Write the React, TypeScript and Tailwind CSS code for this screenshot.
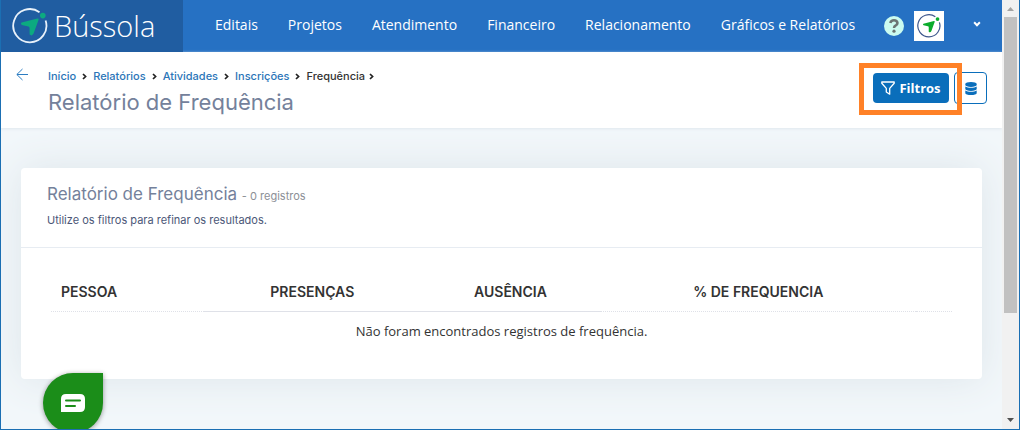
import { FaDatabase } from "react-icons/fa";

const MENU = ["Editais", "Projetos", "Atendimento", "Financeiro", "Relacionamento", "Gráficos e Relatórios"];

const TRAIL = ["Início", "Relatórios", "Atividades", "Inscrições"];

const COLUMNS = [
  { label: "PESSOA", className: "w-[17%] border-dotted px-2.5 text-left" },
  { label: "PRESENÇAS", className: "w-[24%] border-solid text-center" },
  { label: "AUSÊNCIA", className: "w-[20%] border-solid text-center" },
  { label: "% DE FREQUENCIA", className: "w-[35%] border-dotted text-center" },
  { label: "", className: "border-dotted" },
];

function Compass({ ring, mark, className }: { ring: string; mark: string; className: string }) {
  return (
    <svg viewBox="0 0 36 36" className={className} fill="none" aria-hidden="true">
      <path d="M27.5 4.2A16.6 16.6 0 1 0 33.6 12.5" stroke={ring} strokeWidth="1.8" />
      <circle cx="30.8" cy="7.6" r="2.8" fill={mark} />
      <path
        d="M9.6 14.6L25.4 10.6Q27 10.4 26.5 12L21.6 25.6Q20 28.6 17.6 26.6L17.6 20Q17.5 18.7 16.4 18.4L9.8 17Q8 15.6 9.6 14.6Z"
        fill={mark}
      />
    </svg>
  );
}

function Chevron({ className }: { className: string }) {
  return (
    <svg viewBox="0 0 5 7" className={className} fill="none" stroke="currentColor" strokeWidth="1.7" aria-hidden="true">
      <path d="M1 1L3.6 3.5L1 6" />
    </svg>
  );
}

function TopBar() {
  return (
    <header className="flex h-[52px] items-center bg-[#2671c3] text-white">
      <a href="#" className="flex h-full w-[182px] shrink-0 items-center gap-1.5 bg-[#205da1] pl-[11px]">
        <Compass ring="#e8f1fa" mark="#0caa80" className="h-9 w-9" />
        <span className="font-['Open_Sans'] text-[29px] leading-9 font-light">Bússola</span>
      </a>
      <nav className="-mt-0.5 flex flex-1 gap-[30px] pl-8 text-[14px] leading-5 whitespace-nowrap">
        {MENU.map((item) => (
          <a key={item} href="#">{item}</a>
        ))}
      </nav>
      <div className="flex items-center pr-5">
        <button type="button" aria-label="Ajuda" className="flex h-5 w-5 items-center justify-center rounded-full bg-[#cbfbf0]">
          <svg viewBox="0 0 10 14" className="h-3.5 w-2.5" fill="none" aria-hidden="true">
            <path d="M1.3 4Q2 1.3 5 1.3T8.5 4Q8.5 5.4 6.8 6.3Q5 7.2 5 9" stroke="#6b7573" strokeWidth="2.5" />
            <circle cx="5" cy="12.2" r="1.6" fill="#6b7573" />
          </svg>
        </button>
        <div className="ml-2.5 flex h-[30px] w-[30px] items-center justify-center bg-white">
          <Compass ring="#3d568c" mark="#0bac2c" className="h-6 w-6" />
        </div>
        <button type="button" aria-label="Conta" className="mb-1 ml-7 flex h-5 w-2.5 items-center justify-center">
          <Chevron className="h-2 w-1.5 rotate-90" />
        </button>
      </div>
    </header>
  );
}

function PageHeader() {
  return (
    <div className="flex h-[76px] justify-between bg-white pr-[15px] pl-[15px] shadow-[0_1px_3px_#dfe7ee]">
      <div className="flex gap-5 pt-4">
        <a href="#" aria-label="Voltar" className="h-4 text-[#2b7cc1]">
          <svg viewBox="0 0 12 14" className="h-3.5 w-3" fill="none" stroke="currentColor" aria-hidden="true">
            <path d="M6.5 1L.8 6.5L6.5 12M1 6.5H12" />
          </svg>
        </a>
        <div>
          <nav className="flex items-center font-['Inter'] text-[11px] leading-4 font-medium text-[#2b75b8]">
            {TRAIL.map((item) => (
              <span key={item} className="flex items-center">
                <a href="#">{item}</a>
                <Chevron className="mx-1.5 h-[7px] w-[5px] text-[#222]" />
              </span>
            ))}
            <span className="text-[#333]">Frequência</span>
            <Chevron className="ml-1 h-[7px] w-[5px] text-[#222]" />
          </nav>
          <h1 className="mt-1 font-['Inter'] text-[22px] leading-7 text-[#74819b]">Relatório de Frequência</h1>
        </div>
      </div>
      <div className="flex items-start gap-[5px] pt-5">
        <div className="relative">
          <button type="button" className="mt-px flex h-[30px] w-[76px] items-center justify-center gap-1 rounded bg-[#0a6ebb] text-[13px] leading-5 font-bold text-white">
            <svg viewBox="0 0 14 14" className="h-3.5 w-3.5" fill="none" stroke="currentColor" strokeWidth="1.3" strokeLinejoin="round" aria-hidden="true">
              <path d="M.8 1H13.2V2.3L8.7 7.4V13.2L5.3 11V7.4L.8 2.3Z" />
            </svg>
            Filtros
          </button>
          {/* Destaque do botão de filtros */}
          <div className="pointer-events-none absolute -top-[9px] -right-[13px] -bottom-3 -left-3.5 z-10 border-5 border-[#ff8127]" />
        </div>
        <button type="button" aria-label="Dados" className="flex h-8 w-[33px] items-center justify-center rounded border border-[#0a6ebb] text-[#0a6ebb]">
          <FaDatabase className="h-[13px] w-3" />
        </button>
      </div>
    </div>
  );
}

function Report() {
  return (
    <section className="mx-5 mt-10 rounded bg-white pb-[38px] shadow-[0_0_40px_#dde5ea]">
      <div className="h-20 border-b border-[#e7ecf2] px-[26px] pt-3.5 font-['Inter']">
        <h2 className="text-[17px] leading-6 text-[#74819b]">
          Relatório de Frequência <small className="text-[11px] text-[#8c8f96]">- 0 registros</small>
        </h2>
        <p className="mt-1 text-[11px] leading-4 text-[#4b5778]">Utilize os filtros para refinar os resultados.</p>
      </div>
      <div className="px-[30px] pt-[25px]">
        <table className="w-full table-fixed text-[13px] leading-5 text-[#333]">
          <thead>
            <tr>
              {COLUMNS.map((col, i) => (
                <th key={i} className={`h-[38px] border-b border-[#dfe1e8] font-['Inter'] text-[14px] leading-5 font-semibold ${col.className}`}>
                  {col.label}
                </th>
              ))}
            </tr>
          </thead>
          <tbody>
            <tr>
              <td colSpan={5} className="pt-[9px] text-center">Não foram encontrados registros de frequência.</td>
            </tr>
          </tbody>
        </table>
      </div>
    </section>
  );
}

function ScrollTrack() {
  return (
    <div className="flex w-[17px] shrink-0 flex-col items-center bg-[#f1f1f1]" aria-hidden="true">
      <svg viewBox="0 0 17 17" className="h-[17px] w-[17px] shrink-0">
        <path d="M5 11L8.5 7L12 11Z" fill="#a3a3a3" />
      </svg>
      <div className="h-[69%] w-[13px] bg-[#c1c1c1]" />
      <svg viewBox="0 0 17 17" className="mt-auto h-[17px] w-[17px] shrink-0">
        <path d="M5 6H12L8.5 10Z" fill="#505050" />
      </svg>
    </div>
  );
}

export default function App() {
  return (
    <div className="relative flex h-screen overflow-hidden border-x border-b border-[#1b6fb3] font-['Open_Sans',sans-serif]">
      <main className="min-w-0 flex-1 overflow-hidden bg-[#f2f7fa]">
        <TopBar />
        <PageHeader />
        <Report />
      </main>
      <ScrollTrack />
      <button
        type="button"
        aria-label="Abrir chat"
        className="absolute -bottom-1 left-[42px] flex h-[60px] w-[60px] items-center justify-center rounded-full rounded-tr-md bg-[#1b8d19] shadow-[0_1px_5px_#00000066]"
      >
        <svg viewBox="0 0 24 18" className="h-[18px] w-6" aria-hidden="true">
          <path d="M0 18V5Q0 0 5 0H19Q24 0 24 5V13Q24 18 19 18Z" fill="#fff" />
          <path d="M5 6.5H19M5 12H14" stroke="#1b8d19" strokeWidth="2" strokeLinecap="round" />
        </svg>
      </button>
    </div>
  );
}
